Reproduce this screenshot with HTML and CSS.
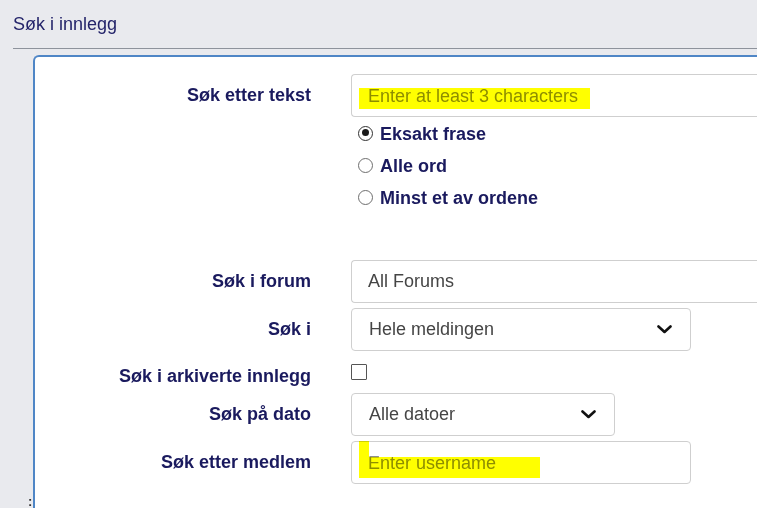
FILE: index.html
```html
<!DOCTYPE html>
<html lang="no">
<head>
<meta charset="utf-8">
<title>Søk i innlegg</title>
<link rel="stylesheet" href="styles.css">
</head>
<body>
<div class="page">
  <div class="header">Søk i innlegg</div>
  <span class="dots">:</span>
  <div class="card">
    <div class="row">
      <div class="label">Søk etter tekst</div>
      <div class="field wide">
        <span class="hl hl-text"></span>
        <span class="ph">Enter at least 3 characters</span>
      </div>
    </div>
    <div class="row radios-row">
      <div class="label"></div>
      <div class="radios">
        <div class="radio-item"><span class="radio checked"></span><span class="rlabel">Eksakt frase</span></div>
        <div class="radio-item"><span class="radio"></span><span class="rlabel">Alle ord</span></div>
        <div class="radio-item"><span class="radio"></span><span class="rlabel">Minst et av ordene</span></div>
      </div>
    </div>
    <div class="row forum-row">
      <div class="label">Søk i forum</div>
      <div class="field wide"><span class="val">All Forums</span></div>
    </div>
    <div class="row gap5">
      <div class="label">Søk i</div>
      <div class="field select s339">
        <span class="val">Hele meldingen</span>
        <svg class="chev" width="15" height="9" viewBox="0 0 15 9"><path d="M1.5 1.5 L7.5 7 L13.5 1.5" fill="none" stroke="#111" stroke-width="2.6" stroke-linecap="round" stroke-linejoin="round"/></svg>
      </div>
    </div>
    <div class="row check-row">
      <div class="label lower">Søk i arkiverte innlegg</div>
      <div class="checkwrap"><span class="checkbox"></span></div>
    </div>
    <div class="row">
      <div class="label">Søk på dato</div>
      <div class="field select s263">
        <span class="val">Alle datoer</span>
        <svg class="chev" width="15" height="9" viewBox="0 0 15 9"><path d="M1.5 1.5 L7.5 7 L13.5 1.5" fill="none" stroke="#111" stroke-width="2.6" stroke-linecap="round" stroke-linejoin="round"/></svg>
      </div>
    </div>
    <div class="row gap5">
      <div class="label">Søk etter medlem</div>
      <div class="field s339">
        <span class="hl hl-user-bar"></span>
        <span class="hl hl-user"></span>
        <span class="ph">Enter username</span>
      </div>
    </div>
  </div>
</div>
</body>
</html>
```
FILE: styles.css
```css
html, body {
  margin: 0;
  padding: 0;
  overflow: hidden;
  height: 100%;
}
body {
  background: #e9eaee;
  font-family: "Liberation Sans", Arial, sans-serif;
}
.page {
  position: relative;
  width: 1000px;
}
.header {
  margin-left: 13px;
  padding: 13px 0 13px 0;
  line-height: 22px;
  font-size: 18px;
  color: #24246a;
  border-bottom: 1px solid #8e939c;
}
.dots {
  position: absolute;
  left: 28px;
  top: 494px;
  font-size: 13px;
  font-weight: bold;
  color: #333;
}
.card {
  margin: 6px 0 0 33px;
  background: #fff;
  border: 2px solid #4f86c6;
  border-right: none;
  border-bottom: none;
  border-top-left-radius: 6px;
  padding-top: 17px;
  height: 600px;
}
.row {
  display: flex;
  align-items: center;
  gap: 40px;
}
.label {
  width: 276px;
  flex: none;
  text-align: right;
  font-weight: bold;
  font-size: 18px;
  color: #1a1a5e;
}
.lower {
  margin-top: 8px;
}
.field {
  position: relative;
  box-sizing: border-box;
  height: 43px;
  border: 1px solid #cfcfcf;
  border-radius: 4px;
  background: #fff;
  display: flex;
  align-items: center;
  padding: 0 17px 0 16px;
  font-size: 18px;
}
.wide { width: 600px; border-right: none; }
.s339 { width: 340px; }
.s263 { width: 264px; }
.select {
  justify-content: space-between;
  padding-left: 17px;
  padding-right: 18px;
}
.val {
  color: #454545;
}
.ph {
  position: relative;
  top: 1px;
  color: #8e8e8e;
}
.hl {
  position: absolute;
  background: #ffff00;
  z-index: 2;
  mix-blend-mode: multiply;
}
.hl-text {
  left: 7px;
  top: 13px;
  width: 231px;
  height: 21px;
}
.hl-user-bar {
  left: 7px;
  top: -1px;
  width: 10px;
  height: 37px;
}
.hl-user {
  left: 7px;
  top: 15px;
  width: 181px;
  height: 21px;
}
.radios-row {
  margin-top: 1px;
  align-items: flex-start;
}
.radios {
  display: flex;
  flex-direction: column;
}
.radio-item {
  height: 32px;
  display: flex;
  align-items: center;
  gap: 7px;
  padding-left: 7px;
}
.radio {
  box-sizing: border-box;
  width: 15px;
  height: 15px;
  border-radius: 50%;
  border: 1px solid #6e6e6e;
  background: #fff;
  position: relative;
  margin-top: -2px;
}
.radio.checked {
  border: 1.5px solid #333;
}
.radio.checked::after {
  content: "";
  position: absolute;
  left: 2.5px;
  top: 2.5px;
  width: 7px;
  height: 7px;
  border-radius: 50%;
  background: #1a1a1a;
}
.rlabel {
  font-weight: bold;
  font-size: 18px;
  color: #1a1a5e;
}
.forum-row {
  margin-top: 46px;
}
.gap5 {
  margin-top: 5px;
}
.check-row {
  height: 42px;
}
.checkwrap {
  height: 42px;
  display: flex;
  align-items: center;
}
.checkbox {
  box-sizing: border-box;
  width: 16px;
  height: 16px;
  border: 1px solid #555;
  border-radius: 1px;
  background: #fff;
  margin-top: -1px;
}
.chev {
  display: block;
}
```
